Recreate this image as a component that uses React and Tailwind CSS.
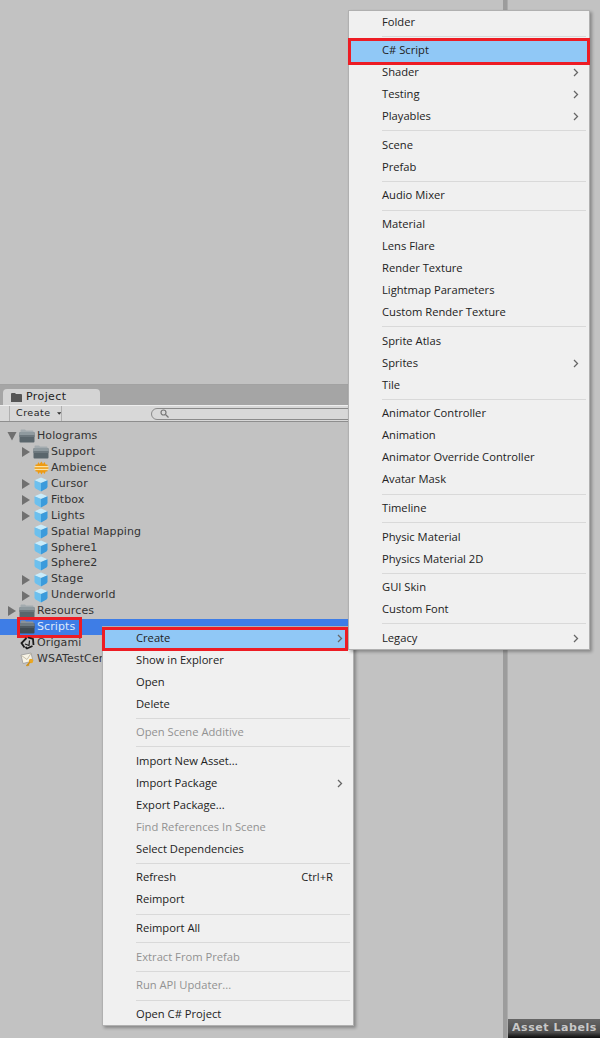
import React from 'react';

const MENU_FONT = 'font-["Open_Sans",sans-serif]';

const FolderIcon = ({ dark }) => (
  <svg width="16" height="14" viewBox="0 0 16 14">
    <path d="M1.500 3V1.500q0-1 1-1h3.500l1 1h6.500q1 0 1 1V4h-13z" fill={dark ? '#8a9297' : '#a3abaf'} />
    <rect x="0.500" y="3" width="15" height="10.500" rx="1" fill={dark ? '#3f4a51' : '#5a666c'} />
    <rect x="0.500" y="3" width="15" height="3.500" rx="1" fill={dark ? '#6f7b82' : '#8f9a9f'} />
    <rect x="0.500" y="6" width="15" height="2" fill={dark ? '#4f5a61' : '#6d787e'} />
  </svg>
);

const CubeIcon = () => (
  <svg width="14" height="15" viewBox="0 0 14 15">
    <path d="M7 0.500 13.500 3.200 7 6 0.500 3.200z" fill="#c9ecfb" />
    <path d="M0.500 3.200 7 6V14.500L1.500 11.500 0.500 10z" fill="#6cc0ee" />
    <path d="M13.500 3.200 7 6V14.500L12.500 11.500 13.500 10z" fill="#3b9bdc" />
  </svg>
);

const AudioIcon = () => (
  <svg width="15" height="14" viewBox="0 0 15 14">
    <path d="M0.500 7 2 3l1 1 1.500-3 1 2 2-2.500L9 3l1.500-2L12 4l1-1 1.500 4-1.500 4-1-1-1.500 3L9 11l-1.500 2.500L6 11l-1.500 2L3 10l-1 1z" fill="#ee9a11" />
    <rect x="0.500" y="5" width="14" height="1.300" fill="#fbe3a6" />
    <rect x="0.500" y="7.800" width="14" height="1.300" fill="#fbe3a6" />
  </svg>
);

const UnityIcon = () => (
  <svg width="15" height="14" viewBox="0 0 15 14" fill="none" stroke="#1a1a1a" strokeWidth="1.800">
    <path d="M6.500 2 1.500 7l3 4.500" />
    <path d="M8 1.500 13 3l.500 6" />
    <path d="M12.500 10 7 12.500 5.500 11" />
    <path d="M9.500 4.500 9 9.500 5 8" strokeWidth="1.200" />
  </svg>
);

const CertificateIcon = () => (
  <svg width="15" height="15" viewBox="0 0 15 15">
    <path d="M1 3 11 1l2 8-10 2.500z" fill="#f7f3e6" stroke="#9a9a9a" strokeWidth="0.800" />
    <path d="M1.500 3.500 7 7.500 11 1.500" fill="none" stroke="#b8b09a" strokeWidth="0.800" />
    <circle cx="11" cy="9" r="2.200" fill="#eaa722" />
    <path d="M10 10 6.500 14M8 12.500l1 1" stroke="#d08f14" strokeWidth="1.500" fill="none" />
  </svg>
);

// expanded / collapsed triangles in the tree
const Arrow = ({ open }) => (
  <svg width="12" height="12" viewBox="0 0 12 12">
    {open ? <path d="M1.500 2h9L6 10.500z" fill="#707070" /> : <path d="M2 1l8 5-8 5z" fill="#707070" />}
  </svg>
);

const tree = [
  { label: 'Holograms', depth: 0, arrow: 'open', icon: 'folder' },
  { label: 'Support', depth: 1, arrow: 'closed', icon: 'folder' },
  { label: 'Ambience', depth: 1, icon: 'audio' },
  { label: 'Cursor', depth: 1, arrow: 'closed', icon: 'cube' },
  { label: 'Fitbox', depth: 1, arrow: 'closed', icon: 'cube' },
  { label: 'Lights', depth: 1, arrow: 'closed', icon: 'cube' },
  { label: 'Spatial Mapping', depth: 1, icon: 'cube' },
  { label: 'Sphere1', depth: 1, icon: 'cube' },
  { label: 'Sphere2', depth: 1, icon: 'cube' },
  { label: 'Stage', depth: 1, arrow: 'closed', icon: 'cube' },
  { label: 'Underworld', depth: 1, arrow: 'closed', icon: 'cube' },
  { label: 'Resources', depth: 0, arrow: 'closed', icon: 'folder' },
  { label: 'Scripts', depth: 0, icon: 'folder', selected: true },
  { label: 'Origami', depth: 0, icon: 'unity' },
  { label: 'WSATestCertificate', depth: 0, icon: 'certificate' },
];

const TreeIcon = ({ type, dark }) => {
  if (type === 'folder') return <FolderIcon dark={dark} />;
  if (type === 'audio') return <AudioIcon />;
  if (type === 'cube') return <CubeIcon />;
  if (type === 'unity') return <UnityIcon />;
  return <CertificateIcon />;
};

const TreeRow = ({ row }) => (
  <div
    className={`relative flex h-[15.93px] items-center gap-px ${row.depth === 1 ? 'pl-5' : 'pl-1.5'} ${row.selected ? 'bg-[#3e7de6] text-[#dfe9fa]' : 'text-[#333333]'}`}
  >
    <span className="flex w-3 shrink-0 justify-center">{row.arrow && <Arrow open={row.arrow === 'open'} />}</span>
    <span className="flex w-4 shrink-0 justify-center">
      <TreeIcon type={row.icon} dark={row.selected} />
    </span>
    <span className="ml-px tracking-[0.1px] whitespace-nowrap">{row.label}</span>
    {row.selected && (
      <span className="absolute -top-0.5 left-[17px] h-[21px] w-[65px] border-[3px] border-[#ed1c24]" />
    )}
  </div>
);

const createMenu = [
  { label: 'Folder' },
  { sep: true },
  { label: 'C# Script', active: true },
  { label: 'Shader', sub: true },
  { label: 'Testing', sub: true },
  { label: 'Playables', sub: true },
  { sep: true },
  { label: 'Scene' },
  { label: 'Prefab' },
  { sep: true },
  { label: 'Audio Mixer' },
  { sep: true },
  { label: 'Material' },
  { label: 'Lens Flare' },
  { label: 'Render Texture' },
  { label: 'Lightmap Parameters' },
  { label: 'Custom Render Texture' },
  { sep: true },
  { label: 'Sprite Atlas' },
  { label: 'Sprites', sub: true },
  { label: 'Tile' },
  { sep: true },
  { label: 'Animator Controller' },
  { label: 'Animation' },
  { label: 'Animator Override Controller' },
  { label: 'Avatar Mask' },
  { sep: true },
  { label: 'Timeline' },
  { sep: true },
  { label: 'Physic Material' },
  { label: 'Physics Material 2D' },
  { sep: true },
  { label: 'GUI Skin' },
  { label: 'Custom Font' },
  { sep: true },
  { label: 'Legacy', sub: true },
];

const contextMenu = [
  { label: 'Create', sub: true, active: true },
  { label: 'Show in Explorer' },
  { label: 'Open' },
  { label: 'Delete' },
  { sep: true },
  { label: 'Open Scene Additive', disabled: true },
  { sep: true },
  { label: 'Import New Asset...' },
  { label: 'Import Package', sub: true },
  { label: 'Export Package...' },
  { label: 'Find References In Scene', disabled: true },
  { label: 'Select Dependencies' },
  { sep: true },
  { label: 'Refresh', shortcut: 'Ctrl+R' },
  { label: 'Reimport' },
  { sep: true },
  { label: 'Reimport All' },
  { sep: true },
  { label: 'Extract From Prefab', disabled: true },
  { sep: true },
  { label: 'Run API Updater...', disabled: true },
  { sep: true },
  { label: 'Open C# Project' },
];

const MenuRow = ({ item }) => {
  if (item.sep) return <div className="my-[2.825px] ml-[33px] mr-[3px] h-px bg-[#d9d9d9]" />;
  return (
    <div
      className={`relative flex h-[22px] items-center pl-[33px] pr-2.5 ${item.active ? 'bg-[#90c8f6]' : ''} ${item.disabled ? 'text-[#929292]' : 'text-[#222222]'}`}
    >
      <span className="flex-1 whitespace-nowrap">{item.label}</span>
      {item.shortcut && <span className="mr-2.5">{item.shortcut}</span>}
      {item.sub && (
        <svg width="6" height="9" viewBox="0 0 6 9" fill="none" stroke="#666" strokeWidth="1.300">
          <path d="M1 1l3.500 3.500L1 8" />
        </svg>
      )}
    </div>
  );
};

const Menu = ({ items, className, children }) => (
  <div
    className={`absolute border border-[#b0b0b0] bg-[#f0f0f0] text-[11.2px] shadow-[2px_2px_3px_rgba(0,0,0,0.3)] ${MENU_FONT} ${className}`}
  >
    {items.map((item, i) => (
      <MenuRow key={i} item={item} />
    ))}
    {children}
  </div>
);

export default function App() {
  return (
    <div className="relative flex h-[1038px] w-[600px] overflow-hidden bg-[#c2c2c2]">
      {/* Project window */}
      <div className="flex w-[503px] flex-col">
        <div className="h-[385px] border-b border-[#a2a2a2]" />
        <div className="flex h-[20px] items-end bg-[#a5a5a5] pl-[3px]">
          <div className="flex h-[16px] w-[97px] items-center gap-1 rounded-t-sm bg-[#d4d4d4] pl-2 text-[11px] tracking-[0.4px] text-[#222] font-['DejaVu_Sans',sans-serif]">
            <svg width="11" height="9" viewBox="0 0 11 9">
              <path d="M0 1q0-1 1-1h3l1 1h5q1 0 1 1v7H0z" fill="#555" />
            </svg>
            Project
          </div>
        </div>
        <div className="flex h-[17px] items-center border-y border-y-[#8e8e8e] border-t-[#eeeeee] bg-[#d8d8d8] pl-[9px]">
          <div className="flex h-full w-[53px] items-center gap-1.5 border-x border-[#b0b0b0] pl-1.5 text-[9.5px] tracking-[0.5px] text-[#222] font-['DejaVu_Sans',sans-serif]">
            Create
            <svg width="5" height="3" viewBox="0 0 5 3">
              <path d="M0 0h5L2.500 3z" fill="#333" />
            </svg>
          </div>
          <div className="ml-[89px] flex h-3 flex-1 items-center rounded-l-full border border-[#8a8a8a] bg-[#d8d8d8] pl-2">
            <svg width="9" height="9" viewBox="0 0 9 9" fill="none" stroke="#777" strokeWidth="1.200">
              <circle cx="3.500" cy="3.500" r="2.500" />
              <path d="M5.500 5.500 8.500 8.500" />
            </svg>
          </div>
        </div>
        <div className="pt-[6.4px] text-[11px] font-['DejaVu_Sans',sans-serif]">
          {tree.map((row) => (
            <TreeRow key={row.label} row={row} />
          ))}
        </div>
      </div>

      {/* splitter */}
      <div className="w-[5px] border-r border-[#acacac] bg-[#9c9c9c]" />

      {/* Inspector side */}
      <div className="flex flex-1 flex-col justify-end">
        <div className="flex h-[19px] items-center bg-gradient-to-b from-[#666666] via-[#4d4d4d] via-70% to-[#0d0d0d] pl-1 text-[11px] font-bold tracking-[0.55px] text-[#c8c8c8] font-['DejaVu_Sans',sans-serif]">
          Asset Labels
        </div>
      </div>

      <Menu items={contextMenu} className="top-[626px] left-[102px] w-[252px]">
        <span className="absolute top-0 -left-px h-6 w-[246px] border-[3px] border-[#ed1c24]" />
      </Menu>
      <Menu items={createMenu} className="top-[10px] left-[348px] w-[242px]">
        <span className="absolute top-[26.500px] -left-px h-[27px] w-[242px] border-[3px] border-[#ed1c24]" />
      </Menu>
    </div>
  );
}
